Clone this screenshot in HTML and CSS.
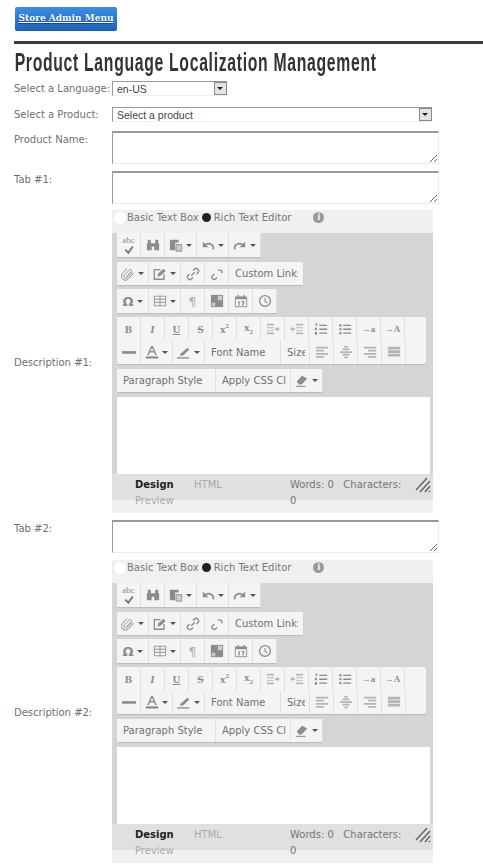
FILE: index.html
```html
<!DOCTYPE html>
<html lang="en">
<head>
    <meta charset="UTF-8">
    <meta name="viewport" content="width=device-width, initial-scale=1.0">
    <title>Product Language Localization Management</title>
    <link rel="stylesheet" href="styles.css">
</head>
<body>
    <svg class="sprite" aria-hidden="true">
        <symbol id="i-spell" viewBox="0 0 16 16"><path d="M2 9l5 5 7-10" fill="none" stroke="currentColor" stroke-width="3"/></symbol>
        <symbol id="i-find" viewBox="0 0 16 16"><path d="M1 6h5.500v8H1zM9.500 6H15v8H9.500zM2 2h3.500v4H2zM10.500 2H14v4h-3.500zM6.500 6h3v4h-3z" fill="currentColor"/></symbol>
        <symbol id="i-paste" viewBox="0 0 16 16"><path d="M1 2h10v3H7v9H1z" fill="currentColor"/><path d="M8 7.500h6.500V15H8z" fill="#ccc" stroke="currentColor"/></symbol>
        <symbol id="i-undo" viewBox="0 0 16 16"><path d="M14 13c1-6-5-8-9-5" fill="none" stroke="currentColor" stroke-width="2"/><path d="M2 4v6.500h6.500z" fill="currentColor"/></symbol>
        <symbol id="i-redo" viewBox="0 0 16 16"><path d="M2 13c-1-6 5-8 9-5" fill="none" stroke="currentColor" stroke-width="2"/><path d="M14 4v6.500H7.500z" fill="currentColor"/></symbol>
        <symbol id="i-clip" viewBox="0 0 16 16"><path d="M13 6L6.500 12.500a2.200 2.200 0 0 1-3-3L10 3a1.500 1.500 0 0 1 2 2L6 11M14.500 7l-6 6.500a4.500 4.500 0 0 1-7-6L7 1.500" fill="none" stroke="currentColor" stroke-width="1.100"/></symbol>
        <symbol id="i-edit" viewBox="0 0 16 16"><path d="M12.500 8v6h-11V3h7" fill="none" stroke="currentColor" stroke-width="1.500"/><path d="M5 11l1-3.500L12 2l2.500 2.500-6 5.500z" fill="currentColor"/></symbol>
        <symbol id="i-link" viewBox="0 0 16 16"><path d="M6 10l4-4M8 4l1.500-1.500a2.800 2.800 0 0 1 4 4L12 8M8 12l-1.500 1.500a2.800 2.800 0 0 1-4-4L4 8" fill="none" stroke="currentColor" stroke-width="1.500"/></symbol>
        <symbol id="i-unlink" viewBox="0 0 16 16"><path d="M5 8L3 10a2.400 2.400 0 0 0 3.500 3.500L8 12M9 3.500h3a2 2 0 0 1 1 3.500" fill="none" stroke="currentColor" stroke-width="1.500"/></symbol>
        <symbol id="i-table" viewBox="0 0 16 16"><path d="M1.500 2.500h13v11h-13zM1.500 6h13M8 2.500v11M1.500 9.500h13" fill="none" stroke="currentColor"/></symbol>
        <symbol id="i-media" viewBox="0 0 16 16"><path d="M1 1h14v14H1z" fill="currentColor"/><path d="M9 2h5v5H9zM2 10h4v4H2z" fill="#ccc"/></symbol>
        <symbol id="i-cal" viewBox="0 0 16 16"><path d="M1.500 3.500h13v11h-13z" fill="none" stroke="currentColor"/><path d="M2 3h12v3H2zM4 1h1.500v3H4zM10.500 1H12v3h-1.500zM5 8h1.500v5H5zM8.500 8H12v1l-1.500 4H9l1.500-4h-2z" fill="currentColor"/></symbol>
        <symbol id="i-clock" viewBox="0 0 16 16"><circle cx="8" cy="8" r="6.200" fill="none" stroke="currentColor" stroke-width="1.500"/><path d="M8 4.500V8.500l3 1.500" fill="none" stroke="currentColor" stroke-width="1.200"/></symbol>
        <symbol id="i-indent" viewBox="0 0 16 16"><path d="M1 2h8v2H1zM1 6h8v1H1zM1 9h8v1H1zM1 12h8v2H1zM10.500 7H13V5l2.500 3L13 11V9h-2.500z" fill="currentColor"/></symbol>
        <symbol id="i-outdent" viewBox="0 0 16 16"><path d="M7 2h8v2H7zM7 6h8v1H7zM7 9h8v1H7zM7 12h8v2H7zM5.500 7H3V5L.5 8 3 11V9h2.500z" fill="currentColor"/></symbol>
        <symbol id="i-ol" viewBox="0 0 16 16"><path d="M6 3h9v1.500H6zM6 7.500h9V9H6zM6 12h9v1.500H6zM2 1.500h1.500v3H2zM1 6.500h2.500v1l-1 1h1v1H1zM1 11.500h2.500v3H1z" fill="currentColor"/></symbol>
        <symbol id="i-ul" viewBox="0 0 16 16"><path d="M6 3h9v1.500H6zM6 7.500h9V9H6zM6 12h9v1.500H6zM1.500 2.500H4V5H1.500zM1.500 7H4v2.500H1.500zM1.500 11.500H4V14H1.500z" fill="currentColor"/></symbol>
        <symbol id="i-hr" viewBox="0 0 16 16"><path d="M0 7h16v3H0z" fill="currentColor"/></symbol>
        <symbol id="i-fore" viewBox="0 0 16 16"><path d="M2.500 11.500L7 1h2l4.500 10.500h-2l-1-3h-5l-1 3zM6.200 6.800h3.600L8 3z" fill="currentColor" fill-rule="evenodd"/><path d="M1 13h14v2.500H1z" fill="currentColor"/></symbol>
        <symbol id="i-pen" viewBox="0 0 16 16"><path d="M4 10l8-7 2 2-7 7-4 0z" fill="currentColor"/><path d="M0 14h14v1.500H0z" fill="currentColor"/></symbol>
        <symbol id="i-left" viewBox="0 0 16 16"><path d="M1 2h14v2H1zM1 5.500h9v2H1zM1 9h14v2H1zM1 12.500h9v2H1z" fill="currentColor"/></symbol>
        <symbol id="i-center" viewBox="0 0 16 16"><path d="M1 7h14v2H1zM4 4h8v2H4zM6 1h4v2H6zM4 10h8v2H4zM6 13h4v2H6z" fill="currentColor"/></symbol>
        <symbol id="i-right" viewBox="0 0 16 16"><path d="M1 2h14v2H1zM6 5.500h9v2H6zM1 9h14v2H1zM6 12.500h9v2H6z" fill="currentColor"/></symbol>
        <symbol id="i-justify" viewBox="0 0 16 16"><path d="M1 2h14v3H1zM1 6h14v3H1zM1 10h14v3H1z" fill="currentColor"/></symbol>
        <symbol id="i-eraser" viewBox="0 0 16 16"><path d="M2 8.500l6-6.500 6 3-6.500 7H4.500z" fill="currentColor"/><path d="M1 13.500h11v1.200H1z" fill="#b77"/></symbol>
        <symbol id="i-grip" viewBox="0 0 16 16"><path d="M1 13L12 1M5 15L15 4M10 15l5-6M14 15l1-1" stroke="#666" stroke-width="1.500" fill="none"/></symbol>
    </svg>

    <div class="top-bar">
        <a class="admin-btn" href="#">Store Admin Menu</a>
    </div>

    <div class="page">
        <h1 class="page-title">Product Language Localization Management</h1>

        <div class="form-row row-lang">
            <label>Select a Language:</label>
            <div class="select-box select-lang"><span>en-US</span><i class="select-arrow"></i></div>
        </div>
        <div class="form-row row-product">
            <label>Select a Product:</label>
            <div class="select-box select-product"><span>Select a product</span><i class="select-arrow"></i></div>
        </div>
        <div class="form-row row-text">
            <label>Product Name:</label>
            <textarea class="form-input"></textarea>
        </div>
        <div class="form-row row-text row-tight">
            <label>Tab #1:</label>
            <textarea class="form-input"></textarea>
        </div>

        <div class="form-row row-editor">
            <label>Description #1:</label>
            <div class="editor">
                <div class="mode-bar">
                    <i class="radio"></i><span>Basic Text Box</span>
                    <i class="radio radio-on"></i><span>Rich Text Editor</span>
                    <i class="info">i</i>
                </div>
                <div class="editor-main">
                    <div class="tool-group">
                        <button class="tool tool-spell"><span class="abc">abc</span><svg><use href="#i-spell"/></svg></button>
                        <button class="tool"><svg><use href="#i-find"/></svg></button>
                        <button class="tool tool-drop"><svg><use href="#i-paste"/></svg><i class="caret"></i></button>
                        <button class="tool tool-drop"><svg><use href="#i-undo"/></svg><i class="caret"></i></button>
                        <button class="tool tool-drop"><svg><use href="#i-redo"/></svg><i class="caret"></i></button>
                    </div>
                    <div class="tool-group">
                        <button class="tool tool-drop"><svg><use href="#i-clip"/></svg><i class="caret"></i></button>
                        <button class="tool tool-drop"><svg><use href="#i-edit"/></svg><i class="caret"></i></button>
                        <button class="tool"><svg><use href="#i-link"/></svg></button>
                        <button class="tool"><svg><use href="#i-unlink"/></svg></button>
                        <button class="tool tool-text w-links"><span>Custom Links</span></button>
                    </div>
                    <div class="tool-group">
                        <button class="tool tool-drop glyph"><b>Ω</b><i class="caret"></i></button>
                        <button class="tool tool-drop"><svg><use href="#i-table"/></svg><i class="caret"></i></button>
                        <button class="tool glyph faint">¶</button>
                        <button class="tool"><svg><use href="#i-media"/></svg></button>
                        <button class="tool"><svg><use href="#i-cal"/></svg></button>
                        <button class="tool"><svg><use href="#i-clock"/></svg></button>
                    </div>
                    <div class="tool-group tool-wrap">
                        <button class="tool letter"><b>B</b></button>
                        <button class="tool letter"><b><em>I</em></b></button>
                        <button class="tool letter"><b><u>U</u></b></button>
                        <button class="tool letter"><b><s>S</s></b></button>
                        <button class="tool letter"><b>x<sup>2</sup></b></button>
                        <button class="tool letter"><b>x<sub>2</sub></b></button>
                        <button class="tool faint"><svg><use href="#i-indent"/></svg></button>
                        <button class="tool faint"><svg><use href="#i-outdent"/></svg></button>
                        <button class="tool"><svg><use href="#i-ol"/></svg></button>
                        <button class="tool"><svg><use href="#i-ul"/></svg></button>
                        <button class="tool letter small">→<b>a</b></button>
                        <button class="tool letter small">→<b>A</b></button>
                        <button class="tool"><svg><use href="#i-hr"/></svg></button>
                        <button class="tool tool-drop"><svg><use href="#i-fore"/></svg><i class="caret"></i></button>
                        <button class="tool tool-drop"><svg><use href="#i-pen"/></svg><i class="caret"></i></button>
                        <button class="tool tool-text w-font"><span>Font Name</span></button>
                        <button class="tool tool-text w-size"><span>Size</span></button>
                        <button class="tool faint"><svg><use href="#i-left"/></svg></button>
                        <button class="tool faint"><svg><use href="#i-center"/></svg></button>
                        <button class="tool faint"><svg><use href="#i-right"/></svg></button>
                        <button class="tool faint"><svg><use href="#i-justify"/></svg></button>
                    </div>
                    <div class="tool-group">
                        <button class="tool tool-text w-para"><span>Paragraph Style</span></button>
                        <button class="tool tool-text w-css"><span>Apply CSS Class</span></button>
                        <button class="tool tool-drop"><svg><use href="#i-eraser"/></svg><i class="caret"></i></button>
                    </div>
                    <div class="edit-area"></div>
                </div>
                <div class="status-bar">
                    <div class="tabs"><b>Design</b><span>HTML</span><span>Preview</span></div>
                    <div class="counts">Words: 0 &nbsp;&nbsp;Characters: 0</div>
                    <svg class="grip"><use href="#i-grip"/></svg>
                </div>
            </div>
        </div>

        <div class="form-row row-text">
            <label>Tab #2:</label>
            <textarea class="form-input"></textarea>
        </div>

        <div class="form-row row-editor">
            <label>Description #2:</label>
            <div class="editor">
                <div class="mode-bar">
                    <i class="radio"></i><span>Basic Text Box</span>
                    <i class="radio radio-on"></i><span>Rich Text Editor</span>
                    <i class="info">i</i>
                </div>
                <div class="editor-main">
                    <div class="tool-group">
                        <button class="tool tool-spell"><span class="abc">abc</span><svg><use href="#i-spell"/></svg></button>
                        <button class="tool"><svg><use href="#i-find"/></svg></button>
                        <button class="tool tool-drop"><svg><use href="#i-paste"/></svg><i class="caret"></i></button>
                        <button class="tool tool-drop"><svg><use href="#i-undo"/></svg><i class="caret"></i></button>
                        <button class="tool tool-drop"><svg><use href="#i-redo"/></svg><i class="caret"></i></button>
                    </div>
                    <div class="tool-group">
                        <button class="tool tool-drop"><svg><use href="#i-clip"/></svg><i class="caret"></i></button>
                        <button class="tool tool-drop"><svg><use href="#i-edit"/></svg><i class="caret"></i></button>
                        <button class="tool"><svg><use href="#i-link"/></svg></button>
                        <button class="tool"><svg><use href="#i-unlink"/></svg></button>
                        <button class="tool tool-text w-links"><span>Custom Links</span></button>
                    </div>
                    <div class="tool-group">
                        <button class="tool tool-drop glyph"><b>Ω</b><i class="caret"></i></button>
                        <button class="tool tool-drop"><svg><use href="#i-table"/></svg><i class="caret"></i></button>
                        <button class="tool glyph faint">¶</button>
                        <button class="tool"><svg><use href="#i-media"/></svg></button>
                        <button class="tool"><svg><use href="#i-cal"/></svg></button>
                        <button class="tool"><svg><use href="#i-clock"/></svg></button>
                    </div>
                    <div class="tool-group tool-wrap">
                        <button class="tool letter"><b>B</b></button>
                        <button class="tool letter"><b><em>I</em></b></button>
                        <button class="tool letter"><b><u>U</u></b></button>
                        <button class="tool letter"><b><s>S</s></b></button>
                        <button class="tool letter"><b>x<sup>2</sup></b></button>
                        <button class="tool letter"><b>x<sub>2</sub></b></button>
                        <button class="tool faint"><svg><use href="#i-indent"/></svg></button>
                        <button class="tool faint"><svg><use href="#i-outdent"/></svg></button>
                        <button class="tool"><svg><use href="#i-ol"/></svg></button>
                        <button class="tool"><svg><use href="#i-ul"/></svg></button>
                        <button class="tool letter small">→<b>a</b></button>
                        <button class="tool letter small">→<b>A</b></button>
                        <button class="tool"><svg><use href="#i-hr"/></svg></button>
                        <button class="tool tool-drop"><svg><use href="#i-fore"/></svg><i class="caret"></i></button>
                        <button class="tool tool-drop"><svg><use href="#i-pen"/></svg><i class="caret"></i></button>
                        <button class="tool tool-text w-font"><span>Font Name</span></button>
                        <button class="tool tool-text w-size"><span>Size</span></button>
                        <button class="tool faint"><svg><use href="#i-left"/></svg></button>
                        <button class="tool faint"><svg><use href="#i-center"/></svg></button>
                        <button class="tool faint"><svg><use href="#i-right"/></svg></button>
                        <button class="tool faint"><svg><use href="#i-justify"/></svg></button>
                    </div>
                    <div class="tool-group">
                        <button class="tool tool-text w-para"><span>Paragraph Style</span></button>
                        <button class="tool tool-text w-css"><span>Apply CSS Class</span></button>
                        <button class="tool tool-drop"><svg><use href="#i-eraser"/></svg><i class="caret"></i></button>
                    </div>
                    <div class="edit-area"></div>
                </div>
                <div class="status-bar">
                    <div class="tabs"><b>Design</b><span>HTML</span><span>Preview</span></div>
                    <div class="counts">Words: 0 &nbsp;&nbsp;Characters: 0</div>
                    <svg class="grip"><use href="#i-grip"/></svg>
                </div>
            </div>
        </div>
    </div>
</body>
</html>
```

FILE: styles.css
```css
* {
    margin: 0;
    padding: 0;
    box-sizing: border-box;
}

html, body {
    height: 864px;
    overflow: hidden;
}

body {
    font-family: "DejaVu Sans", Verdana, sans-serif;
    font-size: 10px;
    color: #707070;
    background: #fff;
}

.sprite {
    display: none;
}

.top-bar {
    padding: 7px 0 10px 15px;
}

.admin-btn {
    display: block;
    width: 102px;
    height: 24px;
    line-height: 23px;
    text-align: center;
    font-family: "DejaVu Serif", serif;
    font-size: 9px;
    font-weight: bold;
    color: #fff;
    background: linear-gradient(#3b8ee6, #1a63c0);
    border-radius: 2px;
    text-shadow: 0 1px 1px #134a90;
}

.page {
    margin-left: 14px;
    border-top: 3px solid #3a3a3a;
}

.page-title {
    width: max-content;
    height: 37px;
    padding: 3px 0 0 1px;
    font-family: "Liberation Sans", Arial, sans-serif;
    font-size: 25px;
    font-weight: bold;
    line-height: 30px;
    letter-spacing: 1.1px;
    color: #333;
    white-space: nowrap;
    transform: scaleX(0.63);
    transform-origin: left;
}

.form-row {
    display: grid;
    grid-template-columns: 98px 1fr;
}

.form-row label {
    white-space: nowrap;
}

.row-lang {
    height: 26px;
}

.row-product {
    height: 24px;
}

.row-text {
    height: 40px;
}

.row-tight {
    height: 39px;
}

.row-text label {
    padding-top: 3px;
}

.row-lang label, .row-product label {
    padding-top: 1px;
    line-height: 14px;
}

.row-editor {
    align-items: center;
    height: 310px;
}

.row-editor label {
    padding-bottom: 6px;
}

.select-box {
    display: flex;
    align-items: center;
    justify-content: space-between;
    height: 15px;
    padding-left: 4px;
    font-family: "Liberation Sans", Arial, sans-serif;
    font-size: 10.5px;
    color: #444;
    border-top: 1px solid #999;
    border-left: 1px solid #999;
    border-bottom: 1px solid #eee;
}

.select-lang {
    width: 115px;
}

.select-product {
    width: 320px;
}

.select-arrow {
    position: relative;
    width: 13px;
    height: 13px;
    background: #e4e4e4;
    border: 1px solid #888;
}

.select-arrow::after {
    content: '';
    position: absolute;
    top: 4px;
    left: 2px;
    border: 3px solid transparent;
    border-top: 3px solid #222;
}

.form-input {
    display: block;
    width: 327px;
    height: 33px;
    background: #fff;
    border: 1px solid #ececec;
    border-top: 2px solid #999;
    border-left: 1px solid #999;
    outline: none;
}

.editor {
    width: 321px;
    height: 303px;
    background: #f0f0f0;
    align-self: start;
}

.mode-bar {
    display: flex;
    align-items: center;
    height: 23px;
    padding-bottom: 8px;
    color: #777;
}

.radio {
    width: 12px;
    height: 12px;
    margin: 0 1px 0 2px;
    border-radius: 50%;
    background: #fff;
}

.radio-on {
    width: 9px;
    height: 9px;
    margin: 0 3px;
    background: #222;
}

.info {
    width: 11px;
    height: 11px;
    margin-left: 22px;
    border-radius: 50%;
    background: #999;
    color: #fff;
    font-size: 8px;
    font-style: normal;
    font-weight: bold;
    line-height: 11px;
    text-align: center;
}

.editor-main {
    height: 241px;
    padding-left: 5px;
    background: #d5d5d5;
}

.tool-group {
    display: flex;
    width: max-content;
    height: 24px;
    margin-bottom: 5px;
    background: #f4f4f4;
    border-radius: 2px;
    box-shadow: 0 1px 1px #bbb;
}

.tool-group:nth-child(2) {
    height: 23px;
    margin-bottom: 4px;
}

.tool-group:nth-child(3) {
    margin-bottom: 4px;
}

.tool-group:nth-child(5) {
    height: 23px;
}

.tool-wrap {
    flex-wrap: wrap;
    width: 309px;
    height: 47px;
}

.tool {
    display: flex;
    align-items: center;
    justify-content: center;
    flex: none;
    width: 24px;
    height: 100%;
    color: #8c8c8c;
    font-family: "DejaVu Sans", sans-serif;
    font-size: 10px;
    background: #f4f4f4;
    border: none;
    border-right: 1px solid #e0e0e0;
    overflow: hidden;
    white-space: nowrap;
}

.tool.faint {
    color: #b4b4b4;
}

.tool-wrap .tool {
    height: 23.5px;
}

.tool svg {
    width: 14px;
    height: 14px;
}

.tool-drop {
    width: 32px;
    gap: 3px;
}

/* the real editor cuts its long captions off, so each caption gets a fixed box */
.tool-text {
    justify-content: flex-start;
    padding-left: 6px;
    color: #707070;
}

.tool-text span {
    display: block;
    overflow: hidden;
}

.w-links {
    width: 74px;
    border-right: none;
}

.w-links span {
    width: 63px;
}

.w-font {
    width: 76px;
}

.w-size {
    width: 29px;
}

.w-size span {
    width: 18px;
}

.w-para {
    width: 99px;
}

.w-css {
    width: 75px;
}

.w-css span {
    width: 64px;
}

.caret {
    width: 0;
    height: 0;
    border: 3px solid transparent;
    border-top: 3px solid #555;
    border-bottom: none;
}

.tool-spell {
    flex-direction: column;
    line-height: 7px;
}

.tool-spell svg {
    height: 10px;
    color: #777;
}

.abc {
    font-family: "Liberation Serif", serif;
    font-size: 9px;
}

.glyph {
    font-size: 13px;
}

.letter {
    font-family: "Liberation Serif", serif;
    font-size: 11px;
}

.letter sup, .letter sub {
    font-size: 7px;
}

.small {
    font-size: 9px;
}

.edit-area {
    width: 313px;
    height: 77px;
    background: #fff;
}

.status-bar {
    position: relative;
    display: flex;
    height: 39px;
    padding: 3px 0 0 23px;
    line-height: 16px;
    color: #777;
    background: linear-gradient(#e0e0e0 26px, #f0f0f0 26px);
}

.tabs {
    display: grid;
    grid-template-columns: 59px 1fr;
    align-content: start;
    width: 155px;
    color: #aaa;
}

.tabs b {
    color: #222;
}

.counts {
    width: 115px;
}

.grip {
    position: absolute;
    top: 3px;
    right: 2px;
    width: 16px;
    height: 16px;
}
```
